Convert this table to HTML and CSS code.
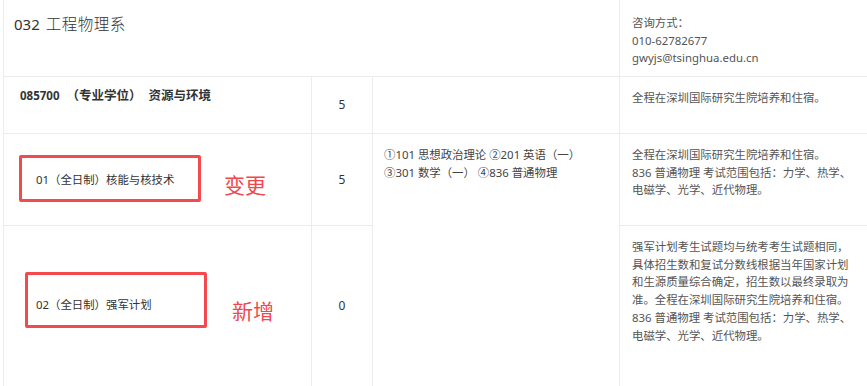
FILE: index.html
```html
<!DOCTYPE html>
<html lang="zh-CN">
<head>
<meta charset="utf-8">
<title>032 工程物理系</title>
<link rel="stylesheet" href="styles.css">
</head>
<body>
<table class="plan">
  <colgroup>
    <col class="c1"><col class="c2"><col class="c3"><col class="c4">
  </colgroup>
  <tr class="r-head">
    <td colspan="3" class="dept"><span class="code">032</span> <span class="dept-name">工程物理系</span></td>
    <td class="note note-head">咨询方式：<br>010-62782677<br>gwyjs@tsinghua.edu.cn</td>
  </tr>
  <tr class="r-major">
    <td class="major"><span class="major-code">085700</span> <span class="cjk">（专业学位）</span> <span class="cjk">资源与环境</span></td>
    <td class="num">5</td>
    <td></td>
    <td class="note">全程在深圳国际研究生院培养和住宿。</td>
  </tr>
  <tr class="r-dir1">
    <td class="dir">
      <div class="dir-wrap wrap-1">
        <span class="mark mark-1">01（全日制）核能与核技术</span>
        <span class="tag tag-1">变更</span>
      </div>
    </td>
    <td class="num">5</td>
    <td rowspan="2" class="exam">①101 思想政治理论 ②201 英语（一）<br>③301 数学（一） ④836 普通物理</td>
    <td class="note">全程在深圳国际研究生院培养和住宿。<br>836 普通物理 考试范围包括：力学、热学、<br>电磁学、光学、近代物理。</td>
  </tr>
  <tr class="r-dir2">
    <td class="dir">
      <div class="dir-wrap wrap-2">
        <span class="mark mark-2">02（全日制）强军计划</span>
        <span class="tag tag-2">新增</span>
      </div>
    </td>
    <td class="num">0</td>
    <td class="note">强军计划考生试题均与统考考生试题相同，具体招生数和复试分数线根据当年国家计划和生源质量综合确定，招生数以最终录取为准。全程在深圳国际研究生院培养和住宿。<br>836 普通物理 考试范围包括：力学、热学、<br>电磁学、光学、近代物理。</td>
  </tr>
</table>
</body>
</html>
```

FILE: styles.css
```css
html, body {
  margin: 0;
  padding: 0;
  background: #ffffff;
}

body {
  font-family: "Noto Sans", "Noto Sans CJK SC", sans-serif;
  color: #404040;
  overflow: hidden;
}

.plan {
  margin-left: 3px;
  margin-top: -1px;
  width: 863px;
  border-collapse: collapse;
  table-layout: fixed;
}

.c1 { width: 308px; }
.c2 { width: 61px; }
.c3 { width: 247px; }
.c4 { width: 247px; }

.plan td {
  border: 1px solid #ececec;
  padding: 0;
  vertical-align: top;
  font-size: 11.4px;
  line-height: 17.7px;
}

.plan td:last-child {
  border-right: none;
}

.r-head { height: 77px; }
.r-major { height: 57px; }
.r-dir1 { height: 92px; }
.r-dir2 { height: 161px; }

.dept {
  padding: 13px 10px 0 !important;
  font-size: 15px !important;
  line-height: 20px !important;
  color: #333;
}

.dept .code {
  font-family: "Noto Sans", sans-serif;
  font-size: 15px;
}

.dept-name {
  font-family: "Noto Sans CJK SC", sans-serif;
  font-weight: 300;
  font-size: 15.5px;
  letter-spacing: 0.5px;
  margin-left: 2px;
}

.note {
  padding: 12px 12px 0 !important;
  color: #555;
}

.note-head {
  padding-top: 14px !important;
}

.exam {
  padding: 12px 11px 0 !important;
  color: #444;
}

.major {
  padding: 10px 16px 0 !important;
  font-weight: 700;
  font-size: 11.5px !important;
  color: #333;
  word-spacing: 4px;
}

.major .cjk {
  font-size: 12.5px;
}

.num {
  text-align: center;
  vertical-align: middle !important;
  font-size: 12px !important;
  color: #333;
}

.dir-wrap {
  display: flex;
  align-items: flex-start;
}

.wrap-1 { padding: 21px 0 0 15px; }
.wrap-2 { padding: 46px 0 0 21px; }

.mark {
  display: block;
  box-sizing: border-box;
  width: 182px;
  border: 3px solid #f44a4d;
  border-radius: 2px;
  color: #333;
}

.mark-1 {
  height: 47px;
  padding: 13px 0 0 14px;
}

.mark-2 {
  height: 56px;
  padding: 21px 0 0 8px;
}

.tag {
  font-family: "Noto Sans CJK SC", sans-serif;
  font-size: 21px;
  line-height: 24px;
  color: #f0484c;
}

.tag-1 { margin: 17px 0 0 23px; }
.tag-2 { margin: 26px 0 0 25px; }
```
